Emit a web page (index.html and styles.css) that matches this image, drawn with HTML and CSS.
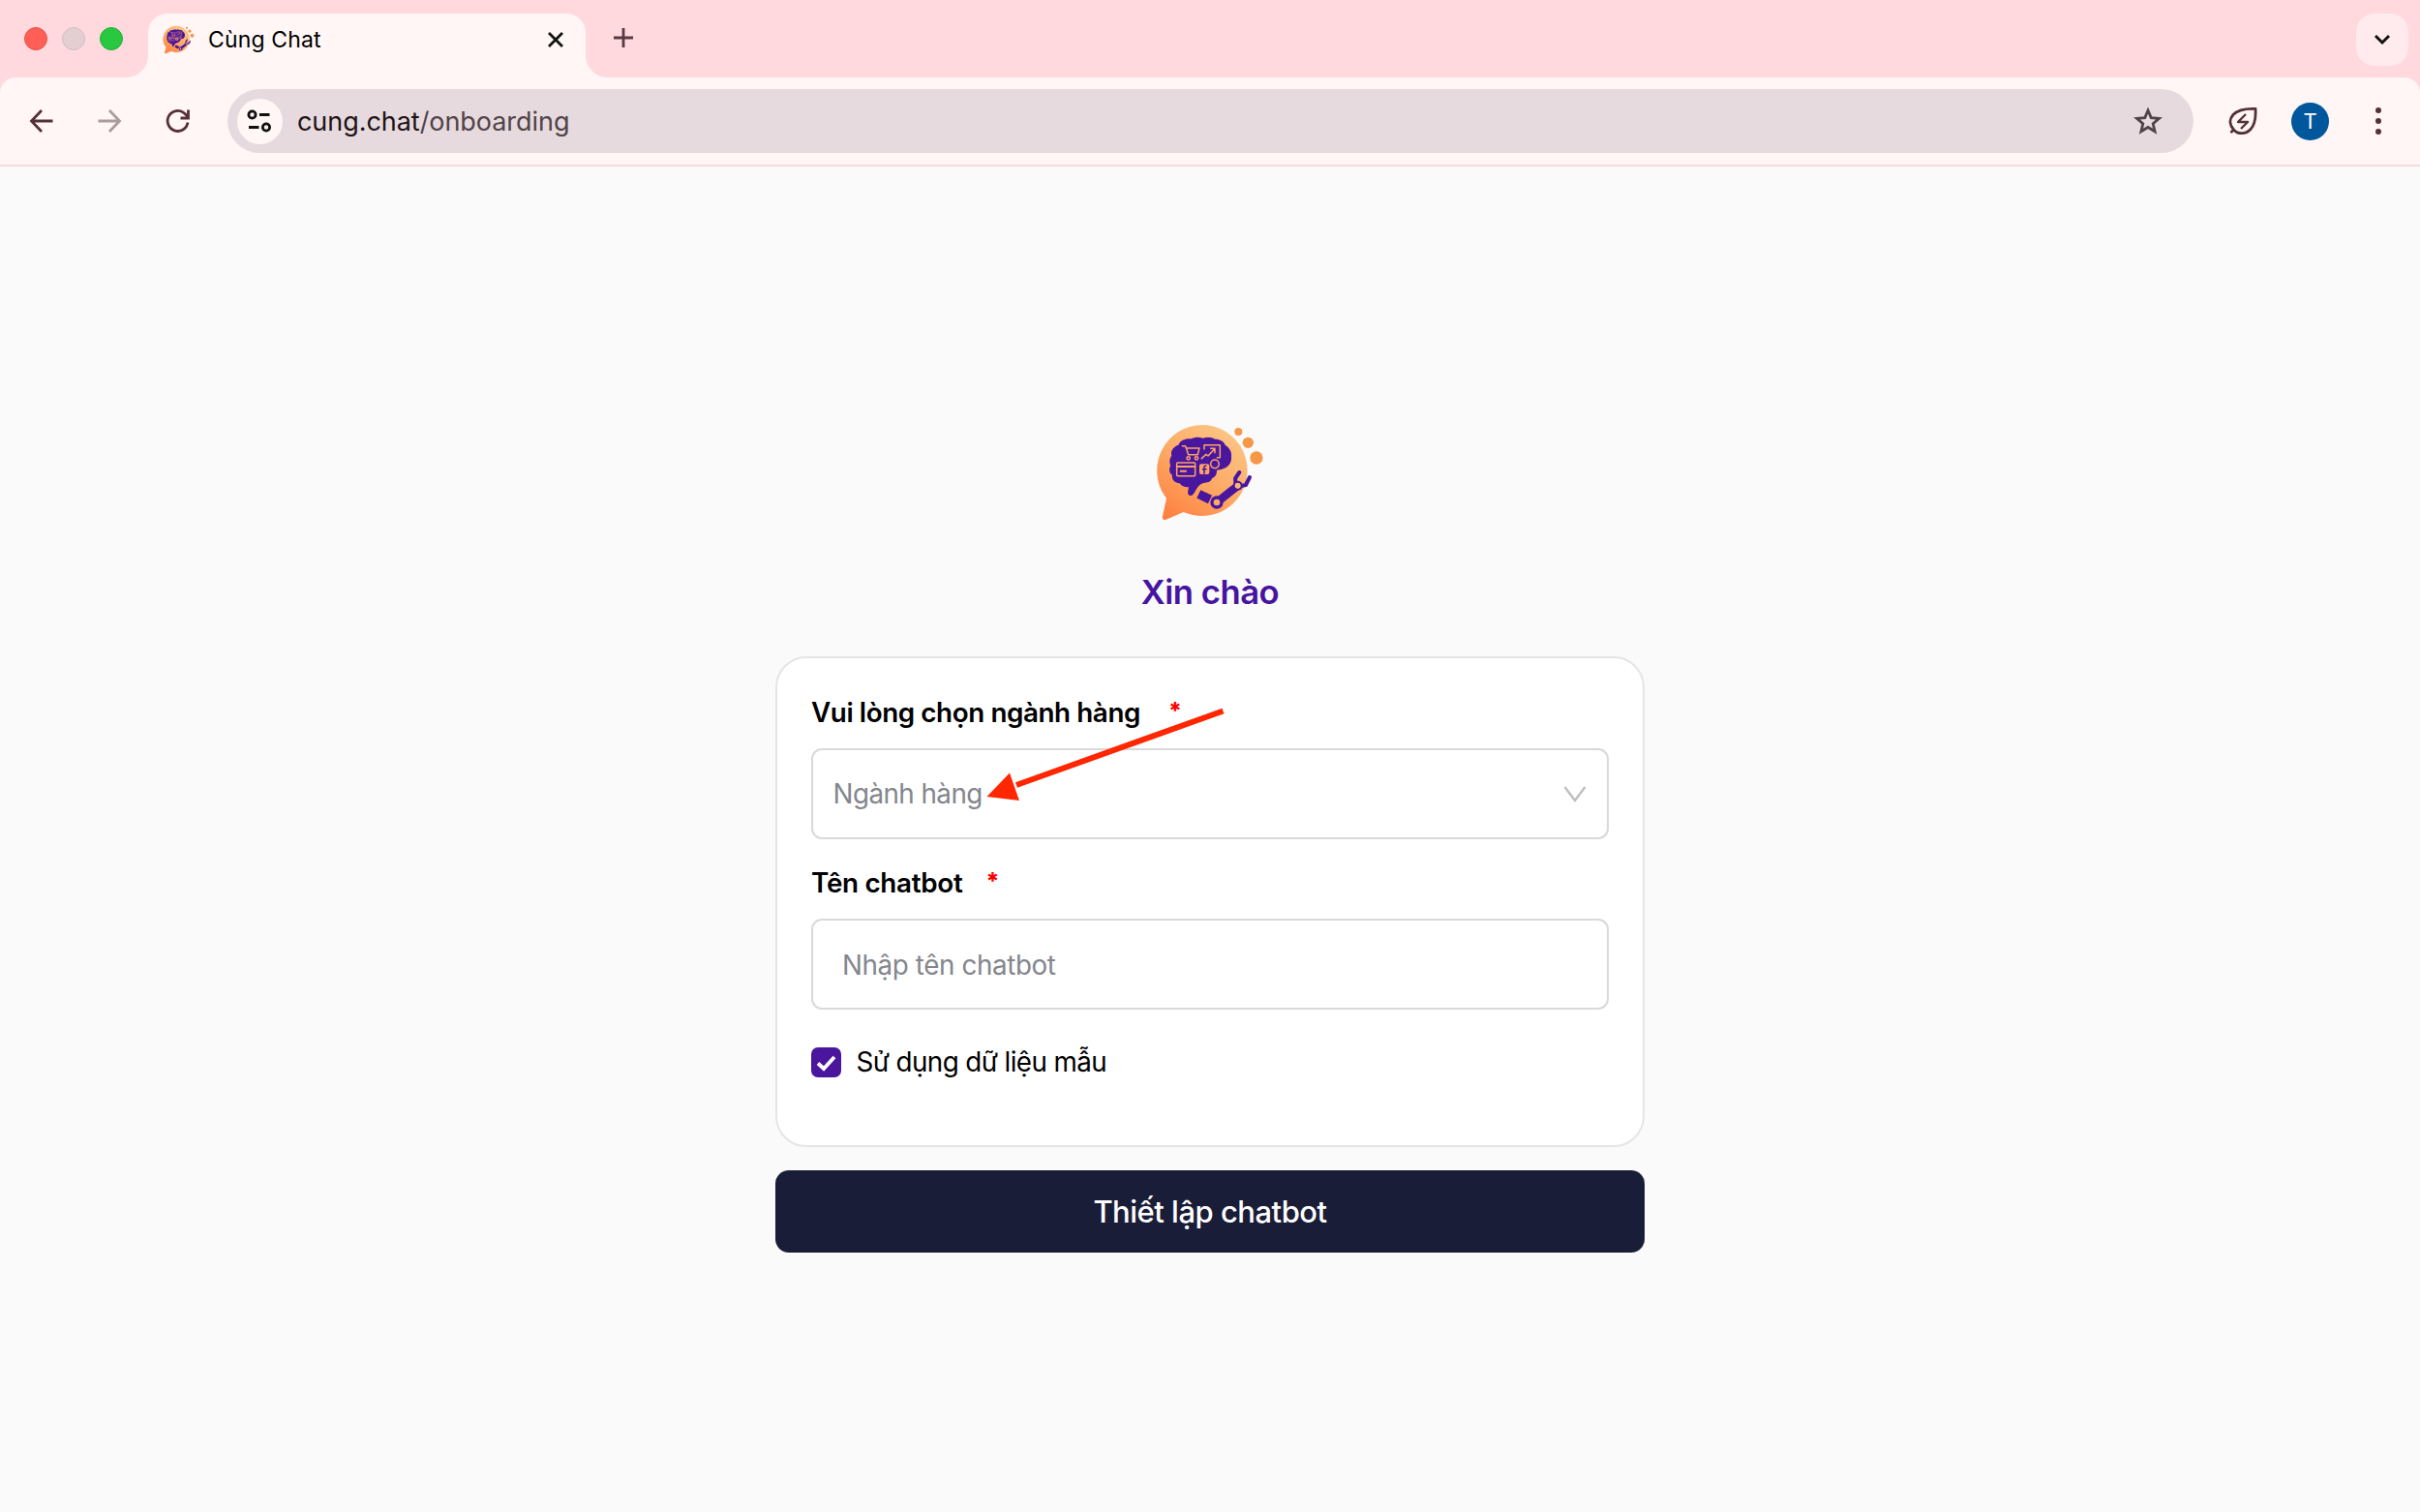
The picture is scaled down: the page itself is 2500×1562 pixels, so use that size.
FILE: index.html
```html
<!DOCTYPE html>
<html lang="vi">
<head>
<meta charset="utf-8">
<title>Cùng Chat</title>
<link rel="stylesheet" href="styles.css">
</head>
<body>
<svg class="defs" width="0" height="0" aria-hidden="true">
  <defs>
    <linearGradient id="bubble" x1="0.15" y1="1" x2="0.85" y2="0">
      <stop offset="0" stop-color="#ff8040"/><stop offset=".5" stop-color="#fcac68"/><stop offset="1" stop-color="#fbc887"/>
    </linearGradient>
    <linearGradient id="dot" x1="0" y1="0" x2="1" y2="1">
      <stop offset="0" stop-color="#f39a3e"/><stop offset="1" stop-color="#fb9450"/>
    </linearGradient>
    <symbol id="logo" viewBox="0 0 540 420">
      <path fill="url(#bubble)" d="M247 57A141 141 0 1 1 188 327L134 350Q120 354 123 340L135 284A141 141 0 0 1 247 57Z"/>
      <g fill="url(#dot)"><circle cx="358" cy="78" r="12"/><circle cx="388" cy="112" r="17"/><circle cx="414" cy="159" r="20"/></g>
      <path fill="#4a169e" d="M172 119C178 104 195 98 211 100C222 94 238 94 248 98C262 93 277 95 286 101C302 101 313 108 317 119C331 127 338 141 336 156C338 174 326 190 310 193C303 196 297 197 291 197C292 211 285 220 276 222C275 231 265 236 254 236C242 238 235 244 229 254L220 269Q214 278 206 275Q199 272 202 262L204 249C192 252 181 246 176 238C159 236 150 225 153 212C143 207 142 192 148 183C142 172 146 158 151 152C147 138 156 124 172 119Z"/>
      <g fill="none" stroke="#fba365" stroke-width="4.5" stroke-linejoin="round" stroke-linecap="round">
        <path d="M184 122H194L203 149H232L237 129H198"/>
        <circle cx="203" cy="160" r="5"/><circle cx="228" cy="160" r="5"/>
        <path d="M252 132V119H301V158H292M244 161L258 148L264 153L284 131M272 130H285V143"/>
        <rect x="167" y="174" width="57" height="41" rx="3"/><path d="M168 186H223M179 200H195" stroke-width="6"/>
        <circle cx="285" cy="178" r="13"/>
      </g>
      <rect x="237" y="178" width="31" height="32" rx="6" fill="#fba365"/>
      <path d="M252 209V188Q252 183 259 184M246 194H260" fill="none" stroke="#4a169e" stroke-width="4.5"/>
      <g stroke="#4a169e" fill="none" stroke-linecap="round">
        <path d="M235 271L270 288" stroke-width="28" stroke-linecap="butt"/>
        <path d="M296 293L353 248" stroke-width="25"/>
        <path d="M350 240L348 223L361 204M362 247L381 243L393 219" stroke-width="12" stroke-linejoin="round"/>
      </g>
      <circle cx="291" cy="297" r="20" fill="#4a169e"/><circle cx="291" cy="297" r="10" fill="#fbaa68"/>
      <circle cx="356" cy="245" r="15" fill="#4a169e"/><circle cx="356" cy="245" r="9" fill="#fbb873"/>
    </symbol>
  </defs>
</svg>
<header class="browser">
  <div class="tabstrip">
    <div class="lights"><i class="light red"></i><i class="light grey"></i><i class="light green"></i></div>
    <div class="tab">
      <svg class="favicon" viewBox="100 50 340 306"><use href="#logo" width="540" height="420"/></svg>
      <span class="tab-title">Cùng Chat</span>
      <svg class="close" viewBox="0 0 18 18"><path d="M2 2L16 16M16 2L2 16"/></svg>
    </div>
    <svg class="plus" viewBox="0 0 22 22"><path d="M11 1V21M1 11H21"/></svg>
    <button class="tab-search"><svg viewBox="0 0 20 14"><path d="M3 3L10 10L17 3"/></svg></button>
  </div>
  <div class="toolbar">
    <svg class="ico back" viewBox="0 0 28 28"><path d="M25.500 14H4M14 3L3.500 14L14 25"/></svg>
    <svg class="ico forward" viewBox="0 0 28 28"><path d="M2.500 14H24M14 3L24.500 14L14 25"/></svg>
    <svg class="ico reload" viewBox="0 0 28 28"><path d="M24 15.500A10.500 10.500 0 1 1 20.500 6L24 9.500M24.500 2.500V11H16.500"/></svg>
    <div class="omnibox">
      <span class="site"><svg viewBox="0 0 28 28"><circle cx="6.500" cy="7.500" r="3.600"/><path d="M14 7.500H24.500M3 20.500H13.500"/><circle cx="21" cy="20.500" r="3.600"/></svg></span>
      <span class="url">cung.chat<span>/onboarding</span></span>
      <svg class="star" viewBox="0 0 30 30"><path d="M15 4L18.200 11.600L26.500 12.300L20.200 17.700L22.100 25.800L15 21.500L7.900 25.800L9.800 17.700L3.500 12.300L11.800 11.600Z"/></svg>
    </div>
    <svg class="leaf" viewBox="0 0 30 30"><path d="M28 2.500C18 2 10 3.500 5 8.500C0 14 2 20 5.500 24C10 29 18 29 23 23.500C28 18 28.500 10 28 2.500ZM5.500 24L2.500 27"/><path class="bolt" d="M18 8L10 16H20L13 23"/></svg>
    <span class="avatar">T</span>
    <svg class="menu" viewBox="0 0 8 30"><circle cx="4" cy="4" r="3"/><circle cx="4" cy="15" r="3"/><circle cx="4" cy="26" r="3"/></svg>
  </div>
</header>
<main class="page">
  <svg class="brand" viewBox="0 0 540 420"><use href="#logo" width="540" height="420"/></svg>
  <h1 class="title">Xin chào</h1>
  <form class="card">
    <label class="label first">Vui lòng chọn ngành hàng<span class="req">*</span></label>
    <div class="field select"><span>Ngành hàng</span><svg class="caret" viewBox="0 0 24 17"><path d="M1.500 1L12 15L22.500 1"/></svg></div>
    <label class="label second">Tên chatbot<span class="req">*</span></label>
    <div class="field input">Nhập tên chatbot</div>
    <div class="check"><span class="box"><svg viewBox="0 0 31 31"><path d="M7 16.500L13 22L24 10"/></svg></span><span>Sử dụng dữ liệu mẫu</span></div>
  </form>
  <button class="submit">Thiết lập chatbot</button>
</main>
<svg class="arrow" viewBox="0 0 260 110"><path class="shaft" d="M253.500 14.500L40 91"/><path class="head" d="M9.500 103L33 78.500L43 107Z"/></svg>
</body>
</html>
```
FILE: styles.css
```css
* { box-sizing: border-box; }
body { margin: 0; width: 2500px; height: 1562px; overflow: hidden; background: #fafafa; font-family: Inter, "Liberation Sans", sans-serif; color: #000; }
svg { display: block; fill: none; flex: none; }
.defs { position: absolute; }
button { border: 0; font: inherit; }

.browser { background: #ffd9de; }
.tabstrip { display: flex; height: 80px; padding: 14px 12px 0 25px; }
.lights { display: flex; gap: 15px; padding-top: 14px; width: 127.500px; }
.light { width: 24px; height: 24px; border-radius: 50%; }
.red { background: #ff5f57; border: 1px solid #e5504a; }
.grey { background: #e3cfd2; border: 1px solid #d0bfc2; }
.green { background: #28c840; border: 1px solid #22b038; }
.tab { position: relative; display: flex; align-items: center; width: 452.500px; height: 66px; padding: 0 22px 12px 15px; background: #fff6f5; border-radius: 20px 20px 0 0; }
.tab::before, .tab::after { content: ""; position: absolute; bottom: 0; width: 22px; height: 22px; }
.tab::before { right: 100%; background: radial-gradient(circle at 0 0, transparent 21.500px, #fff6f5 22px); }
.tab::after { left: 100%; background: radial-gradient(circle at 100% 0, transparent 21.500px, #fff6f5 22px); }
.favicon { width: 33px; height: 32px; margin-right: 14.500px; }
.tab-title { flex: 1; font-size: 23px; line-height: 30px; letter-spacing: .15px; }
.close { width: 18px; height: 18px; stroke: #111; stroke-width: 2.800; }
.plus { width: 22px; height: 22px; margin: 14px 0 0 28px; stroke: #5a3a42; stroke-width: 2.800; }
.tab-search { width: 54px; height: 54px; margin-left: auto; padding: 0; border-radius: 19px; background: #ffebed; display: grid; place-items: center; }
.tab-search svg { width: 20px; height: 14px; stroke: #111; stroke-width: 3; }
.toolbar { display: flex; align-items: center; height: 92px; padding: 0 39px 0 29px; background: #fff6f5; border-radius: 16px 16px 0 0; border-bottom: 2px solid #f5dadd; }
.ico { width: 28px; height: 28px; stroke: #55303a; stroke-width: 2.800; }
.forward { margin-left: 42px; stroke: #ab9ca0; }
.reload { margin-left: 43px; }
.omnibox { display: flex; align-items: center; width: 2031px; height: 66px; margin-left: 36.500px; padding: 0 31.500px 0 10px; border-radius: 33px; background: #e6dade; }
.site { display: grid; place-items: center; width: 47px; height: 47px; border-radius: 50%; background: #fff6f5; margin-right: 15.500px; }
.site svg { width: 28px; height: 28px; stroke: #111; stroke-width: 2.800; }
.url { font-size: 27px; color: #1d1315; letter-spacing: -.05px; }
.url span { color: #514347; }
.star { width: 30px; height: 30px; margin-left: auto; stroke: #514347; stroke-width: 2.800; }
.leaf { width: 30px; height: 30px; margin-left: 36.500px; stroke: #55303a; stroke-width: 2.800; }
.leaf .bolt { stroke-width: 2.400; stroke-linejoin: round; }
.avatar { display: grid; place-items: center; width: 39px; height: 39px; margin-left: 35px; border-radius: 50%; background: #00579b; color: #fff; font: 22px Roboto, sans-serif; }
.menu { width: 8px; height: 30px; margin-left: auto; fill: #55303a; }

.page { display: flex; flex-direction: column; align-items: center; padding-top: 248px; }
.brand { width: 180px; height: 140px; }
.title { margin: 28px 0 0; height: 90px; padding-top: 3px; font-size: 34.700px; line-height: 40px; font-weight: 600; letter-spacing: -.5px; color: #4614a0; }
.card { width: 898px; height: 507px; padding: 36px 35px 0; background: #fff; border: 2px solid #e5e5e5; border-radius: 32px; font-size: 27.800px; }
.label { display: flex; align-items: center; height: 40px; font-weight: 600; letter-spacing: -.3px; }
.label.first { letter-spacing: -.42px; }
.req { color: #f00; margin-left: 24px; font-size: 24px; font-weight: 800; line-height: 30px; padding-bottom: 2px; }
.first .req { margin-left: 29px; }
.field { display: flex; align-items: center; height: 94px; margin-top: 17px; border: 2px solid #d9d9d9; border-radius: 11px; color: #84868d; }
.select { padding: 0 21px 0 20.500px; justify-content: space-between; letter-spacing: -.55px; }
.input { padding: 2px 30px 0; letter-spacing: -.4px; }
.caret { width: 24px; height: 17px; stroke: #bfbfbf; stroke-width: 2.400; }
.label.second { margin-top: 25px; }
.check { display: flex; align-items: center; height: 40px; margin-top: 34px; gap: 15.500px; letter-spacing: -.6px; }
.box { width: 31px; height: 31px; border-radius: 7px; background: #4a169e; }
.box svg { width: 31px; height: 31px; stroke: #fff; stroke-width: 3.800; }
.submit { width: 898px; height: 85px; margin-top: 24px; padding: 0; border-radius: 14px; background: #1a1d37; color: #fff; font-size: 31px; font-weight: 500; letter-spacing: -.5px; }
.arrow { position: absolute; left: 1010px; top: 720px; width: 260px; height: 110px; }
.shaft { stroke: #ff2600; stroke-width: 6; }
.head { fill: #ff2600; }
```
